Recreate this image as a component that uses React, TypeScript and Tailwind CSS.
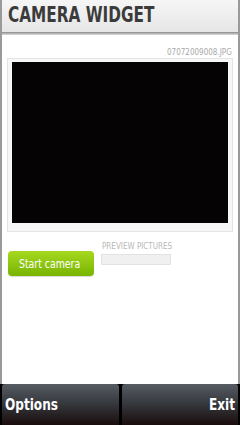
import React from "react";

const f = { fontFamily: '"DejaVu Sans Condensed", "DejaVu Sans", sans-serif' };

export default function App() {
  return (
    <div className="w-[240px] h-[425px] flex flex-col overflow-hidden bg-black">
      <div className="flex-1 flex flex-col bg-white border-x-2 border-[#9a9a9a]">
        <div className="h-[32px] bg-gradient-to-b from-[#f6f6f6] to-[#e6e6e6] flex items-end pl-[6px] pb-[6px]">
          <span
            className="inline-block origin-left scale-x-[0.81] whitespace-nowrap text-[21px] leading-none font-bold text-[#3b3b3b]"
            style={f}
          >
            CAMERA WIDGET
          </span>
        </div>
        <div className="h-[3px] bg-gradient-to-b from-[#8a8a8a] to-[#e0e0e0]" />
        <div className="flex justify-end pr-[6px] pt-[13px] h-[23px]">
          <span
            className="inline-block origin-right scale-x-[0.89] whitespace-nowrap text-[9px] leading-none text-[#a8a8a8]"
            style={f}
          >
            07072009008.JPG
          </span>
        </div>
        <div className="mx-[5px] h-[174px] border border-[#e4e4e4] bg-[#f7f7f7] px-[4px] pt-[3px]">
          <div className="h-[161px] bg-[#050303]" />
        </div>
        <div className="flex mt-[11px] ml-[6px]">
          <div className="mt-[8px] w-[86px] h-[25px] rounded-[4px] bg-gradient-to-b from-[#a6d81e] to-[#78b400] flex items-center pl-[11px] shadow-[0_1px_1px_rgba(0,0,0,0.15)]">
            <span
              className="inline-block origin-left scale-x-[0.8] whitespace-nowrap text-[13px] leading-none text-white"
              style={f}
            >
              Start camera
            </span>
          </div>
          <div className="ml-[7px] flex flex-col">
            <span
              className="text-[8px] leading-none text-[#b8b8b8] pl-[1px] whitespace-nowrap"
              style={f}
            >
              PREVIEW PICTURES
            </span>
            <div className="mt-[3px] w-[70px] h-[11px] bg-[#f0f0f0] border border-[#e2e2e2]" />
          </div>
        </div>
      </div>
      <div className="h-[41px] flex bg-black gap-[3px] px-[2px]">
        {["Options", "Exit"].map((t, i) => (
          <div
            key={t}
            className={`flex-1 rounded-t-[3px] bg-gradient-to-b from-[#575c63] via-[#34373c] to-[#1a0d0d] flex items-center ${i === 0 ? "justify-start pl-[3px]" : "justify-end pr-[3px]"}`}
          >
            <span
              className={`inline-block scale-x-[0.84] whitespace-nowrap text-[16px] leading-none font-bold text-white ${i === 0 ? "origin-left" : "origin-right"}`}
              style={f}
            >
              {t}
            </span>
          </div>
        ))}
      </div>
    </div>
  );
}
